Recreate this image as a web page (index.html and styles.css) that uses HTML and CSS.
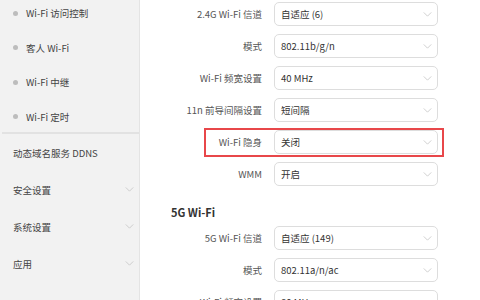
FILE: index.html
```html
<!DOCTYPE html>
<html lang="zh-CN">
<head>
<meta charset="utf-8">
<title>Wi-Fi 设置</title>
<link rel="stylesheet" href="styles.css">
</head>
<body>
<div class="page">
  <aside class="sidebar">
    <ul class="sub-list">
      <li class="sub-item"><span class="dot"></span>Wi-Fi 访问控制</li>
      <li class="sub-item"><span class="dot"></span>客人 Wi-Fi</li>
      <li class="sub-item"><span class="dot"></span>Wi-Fi 中继</li>
      <li class="sub-item"><span class="dot"></span>Wi-Fi 定时</li>
    </ul>
    <div class="divider"></div>
    <ul class="top-list">
      <li class="top-item">动态域名服务 DDNS</li>
      <li class="top-item">安全设置<svg class="chev" viewBox="0 0 10 6"><path d="M0.5 0.5 L5 5 L9.5 0.5"/></svg></li>
      <li class="top-item">系统设置<svg class="chev" viewBox="0 0 10 6"><path d="M0.5 0.5 L5 5 L9.5 0.5"/></svg></li>
      <li class="top-item">应用<svg class="chev" viewBox="0 0 10 6"><path d="M0.5 0.5 L5 5 L9.5 0.5"/></svg></li>
    </ul>
  </aside>
  <main class="main">
    <div class="form">
      <div class="row"><span class="label">2.4G Wi-Fi 信道</span><div class="select">自适应 (6)<svg class="chev" viewBox="0 0 10 6"><path d="M0.5 0.5 L5 5 L9.5 0.5"/></svg></div></div>
      <div class="row"><span class="label">模式</span><div class="select">802.11b/g/n<svg class="chev" viewBox="0 0 10 6"><path d="M0.5 0.5 L5 5 L9.5 0.5"/></svg></div></div>
      <div class="row"><span class="label">Wi-Fi 频宽设置</span><div class="select">40 MHz<svg class="chev" viewBox="0 0 10 6"><path d="M0.5 0.5 L5 5 L9.5 0.5"/></svg></div></div>
      <div class="row"><span class="label">11n 前导间隔设置</span><div class="select">短间隔<svg class="chev" viewBox="0 0 10 6"><path d="M0.5 0.5 L5 5 L9.5 0.5"/></svg></div></div>
      <div class="row highlight"><span class="label">Wi-Fi 隐身</span><div class="select">关闭<svg class="chev" viewBox="0 0 10 6"><path d="M0.5 0.5 L5 5 L9.5 0.5"/></svg></div></div>
      <div class="row"><span class="label">WMM</span><div class="select">开启<svg class="chev" viewBox="0 0 10 6"><path d="M0.5 0.5 L5 5 L9.5 0.5"/></svg></div></div>
    </div>
    <h2 class="section-title">5G Wi-Fi</h2>
    <div class="form">
      <div class="row"><span class="label">5G Wi-Fi 信道</span><div class="select">自适应 (149)<svg class="chev" viewBox="0 0 10 6"><path d="M0.5 0.5 L5 5 L9.5 0.5"/></svg></div></div>
      <div class="row"><span class="label">模式</span><div class="select">802.11a/n/ac<svg class="chev" viewBox="0 0 10 6"><path d="M0.5 0.5 L5 5 L9.5 0.5"/></svg></div></div>
      <div class="row"><span class="label">Wi-Fi 频宽设置</span><div class="select">80 MHz<svg class="chev" viewBox="0 0 10 6"><path d="M0.5 0.5 L5 5 L9.5 0.5"/></svg></div></div>
    </div>
  </main>
</div>
</body>
</html>
```

FILE: styles.css
```css
* { box-sizing: border-box; }
html, body { margin: 0; padding: 0; background: #ffffff; }
body {
  font-family: "Noto Sans CJK SC", "Noto Sans", sans-serif;
  font-size: 9.5px;
  color: #333;
  width: 480px;
  height: 300px;
  overflow: hidden;
}
.page {
  display: flex;
  height: 300px;
}
.sidebar {
  width: 140px;
  flex: none;
  background: #f2f2f2;
  border-right: 1px solid #e4e4e4;
}
.sub-list, .top-list {
  list-style: none;
  margin: 0;
  padding: 0;
}
.sub-list {
  display: flex;
  flex-direction: column;
  gap: 16.5px;
  padding: 4px 0 6.5px;
}
.sub-item {
  height: 18px;
  display: flex;
  align-items: center;
  padding-left: 13px;
  color: #444;
}
.dot {
  width: 5px;
  height: 5px;
  border-radius: 50%;
  background: #bdbdbd;
  margin-right: 8px;
}
.divider {
  height: 2px;
  background: #e2e2e2;
  margin-left: 2px;
}
.top-item {
  height: 37px;
  display: flex;
  align-items: center;
  justify-content: space-between;
  padding: 0 5px 0 13px;
  color: #444;
}
.top-item .chev {
  width: 9px;
  height: 5px;
}
.chev path {
  fill: none;
  stroke: #c6c6c6;
  stroke-width: 1;
}
.main {
  flex: 1;
  padding: 2px 0 0 31px;
}
.form {
  display: flex;
  flex-direction: column;
  align-items: flex-start;
  gap: 8px;
}
.row {
  display: grid;
  grid-template-columns: 91px 164px;
  column-gap: 12px;
  align-items: center;
  width: 267px;
  position: relative;
}
.label {
  text-align: right;
  color: #555;
}
.select {
  height: 24px;
  border: 1px solid #dddddd;
  border-radius: 5px;
  background: #fff;
  display: flex;
  align-items: center;
  justify-content: space-between;
  padding: 0 5px 0 6px;
  color: #333;
}
.select .chev {
  width: 9px;
  height: 5px;
}
.highlight::before {
  content: "";
  position: absolute;
  left: 33px;
  right: -6px;
  top: -2px;
  bottom: -3px;
  border: 2px solid #e8474a;
  pointer-events: none;
}
.section-title {
  margin: 19px 0 7px;
  height: 14px;
  line-height: 14px;
  font-size: 11px;
  font-weight: bold;
  color: #333;
}
```
